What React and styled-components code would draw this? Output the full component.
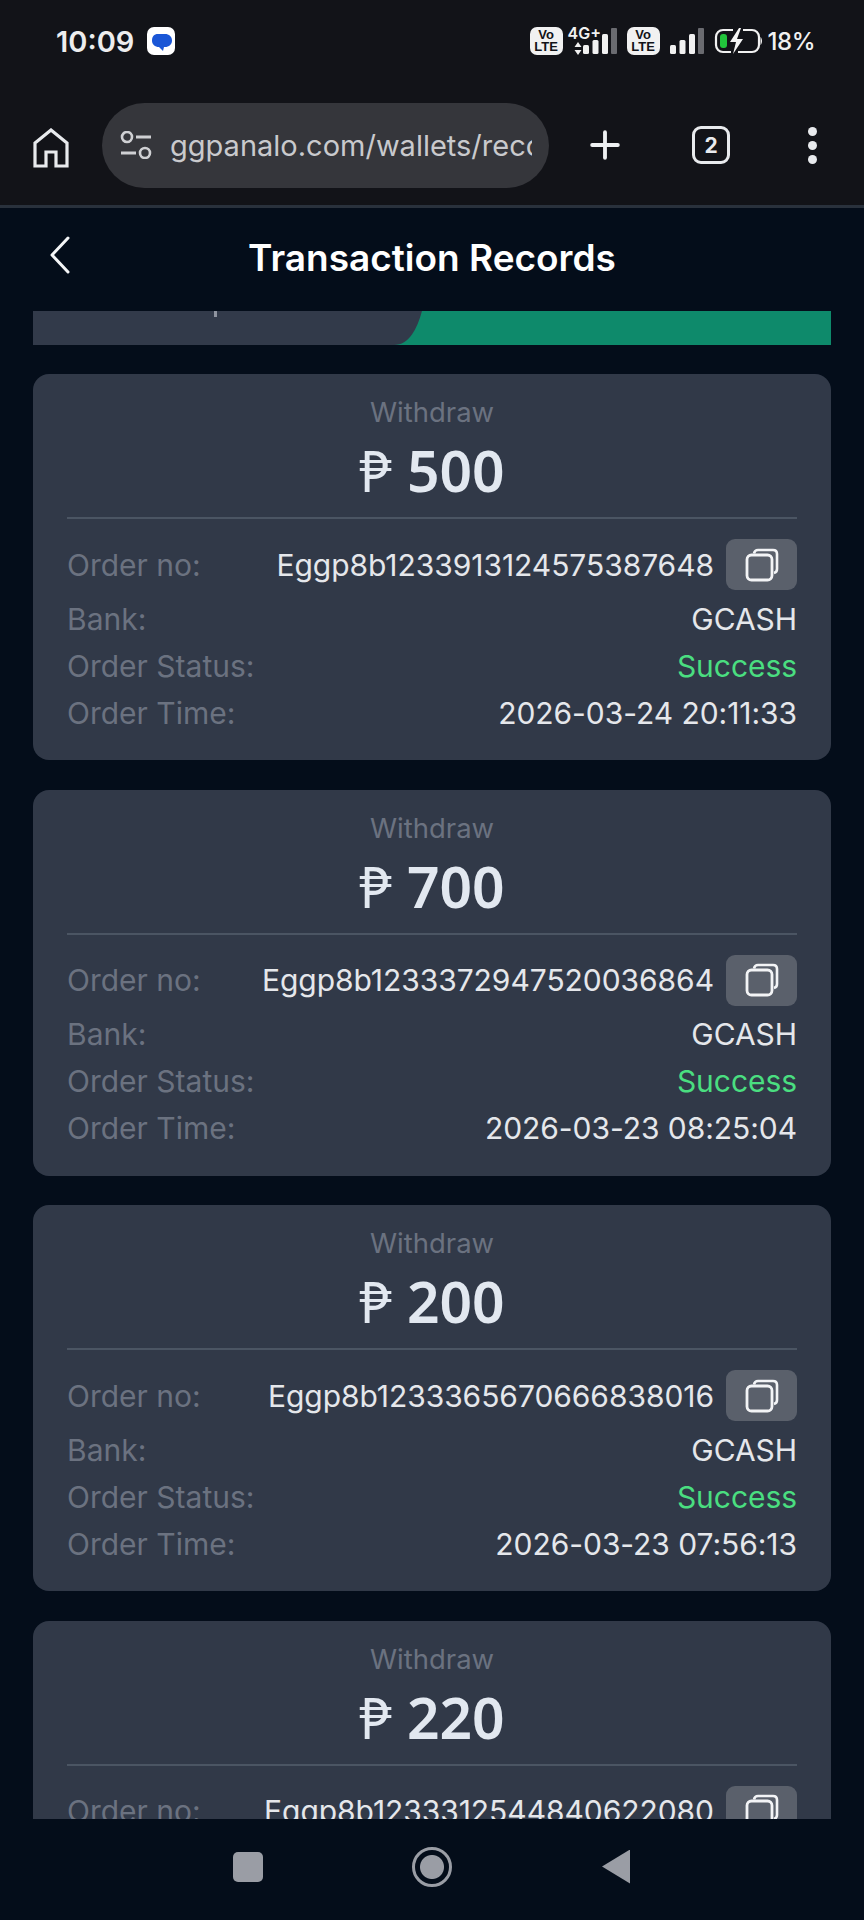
import React from 'react';
import styled, { createGlobalStyle } from 'styled-components';
import { Plus } from 'lucide-react';

const records = [
  { amount: '500', order: 'Eggp8b1233913124575387648', time: '2026-03-24 20:11:33' },
  { amount: '700', order: 'Eggp8b1233372947520036864', time: '2026-03-23 08:25:04' },
  { amount: '200', order: 'Eggp8b1233365670666838016', time: '2026-03-23 07:56:13' },
  { amount: '220', order: 'Eggp8b1233312544840622080' },
];

const App = () => {
  const cards = records.map(item => (
    <Card key={item.order}>
      <Kind>Withdraw</Kind>
      <Amount><Peso>₱</Peso>{item.amount}</Amount>
      <Details>
        <OrderRow>
          <Label>Order no:</Label>
          <OrderValue>
            <Value>{item.order}</Value>
            <CopyButton><CopyIcon /></CopyButton>
          </OrderValue>
        </OrderRow>
        {item.time && (
          <>
            <Row><Label>Bank:</Label><Value>GCASH</Value></Row>
            <Row><Label>Order Status:</Label><Value $success>Success</Value></Row>
            <Row><Label>Order Time:</Label><Value>{item.time}</Value></Row>
          </>
        )}
      </Details>
    </Card>
  ));

  return (
    <Screen>
      <GlobalStyle />
      <BrowserTop>
        <StatusBar>
          <StatusLeft>
            <Clock>10:09</Clock>
            <MessagesIcon />
          </StatusLeft>
          <StatusRight>
            <VoLte><span>Vo</span><span>LTE</span></VoLte>
            <Network>
              <NetworkType>4G+</NetworkType>
              <Arrows />
            </Network>
            <SignalBars />
            <VoLteGap />
            <VoLte><span>Vo</span><span>LTE</span></VoLte>
            <SignalGap />
            <SignalBars />
            <BatteryGap />
            <BatteryIcon />
            <Percent>18%</Percent>
          </StatusRight>
        </StatusBar>
        <Toolbar>
          <HomeIcon />
          <UrlPill>
            <TuneIcon />
            <UrlText>ggpanalo.com/wallets/records</UrlText>
          </UrlPill>
          <PlusButton><Plus size={44} strokeWidth={2.1} color="#eef0f2" /></PlusButton>
          <TabCount>2</TabCount>
          <MenuDots><i /><i /><i /></MenuDots>
        </Toolbar>
      </BrowserTop>

      <Header>
        <BackIcon />
        <Title>Transaction Records</Title>
      </Header>

      <Content>
        <TabStrip>
          <LeftTab><Tick /></LeftTab>
        </TabStrip>
        {cards}
      </Content>

      <NavBar>
        <NavSquare />
        <NavHome />
        <NavBack />
      </NavBar>
    </Screen>
  );
};

const MessagesIcon = () => (
  <svg width="28" height="28" viewBox="0 0 28 28">
    <rect width="28" height="28" rx="7" fill="#fff" />
    <path d="M11 7h7c4 0 7 2.500 7 6.500S22 20 18 20h-1l-1 4-4-4c-4 0-7-2.500-7-6.500S7 7 11 7z" fill="#1a56d6" />
  </svg>
);

const Arrows = () => (
  <svg width="8" height="13" viewBox="0 0 8 13">
    <path d="M4 0l3.5 5H.5zM4 13L.5 8h7z" fill="#f1f1f1" />
  </svg>
);

const SignalBars = () => (
  <svg width="34" height="26" viewBox="0 0 34 26">
    <rect x="0" y="17" width="6" height="9" rx="1.5" fill="#f1f1f1" />
    <rect x="9.5" y="12" width="6" height="14" rx="1.5" fill="#f1f1f1" />
    <rect x="19" y="6" width="6" height="20" rx="1.5" fill="#f1f1f1" />
    <rect x="28" y="0" width="6" height="26" rx="1" fill="#6a6b70" />
  </svg>
);

const BatteryIcon = () => (
  <svg width="48" height="28" viewBox="0 0 48 28">
    <path d="M19 3H9a7 7 0 0 0-7 7v8a7 7 0 0 0 7 7h8M29 3h9a7 7 0 0 1 7 7v8a7 7 0 0 1-7 7H24" fill="none" stroke="#f1f1f1" strokeWidth="2.2" />
    <path d="M46.500 10c1 1 1.500 2.500 1.500 4s-.5 3-1.500 4z" fill="#f1f1f1" />
    <rect x="6" y="7" width="7" height="14" rx="3" fill="#21c53c" />
    <path d="M25 1L16 15h6l-3 12 10-15h-6l4-11z" fill="#f5f5f5" />
  </svg>
);

const HomeIcon = () => (
  <HomeSvg width="36" height="40" viewBox="0 0 36 40">
    <path d="M2 38V15L18 2l16 13v23H23V24H13v14z" fill="none" stroke="#e8eaed" strokeWidth="3.2" />
  </HomeSvg>
);

const TuneIcon = () => (
  <TuneSvg width="32" height="28" viewBox="0 0 32 28">
    <circle cx="7" cy="6" r="5" fill="none" stroke="#cfd0d3" strokeWidth="2.6" />
    <circle cx="25" cy="22" r="5" fill="none" stroke="#cfd0d3" strokeWidth="2.6" />
    <path d="M16 6h15M1 22h15" stroke="#cfd0d3" strokeWidth="2.8" />
  </TuneSvg>
);

const BackIcon = () => (
  <BackSvg width="22" height="38" viewBox="0 0 22 38">
    <path d="M19 2L3 19l16 17" fill="none" stroke="#f4f5f7" strokeWidth="3" strokeLinecap="round" strokeLinejoin="round" />
  </BackSvg>
);

const CopyIcon = () => (
  <svg width="34" height="34" viewBox="0 0 34 34">
    <path d="M9 5.500C9.500 3 11 2 13 2h15c2.500 0 4 1.500 4 4v15c0 2-1 3.500-3 4" fill="none" stroke="#f3f4f6" strokeWidth="2.6" />
    <rect x="2" y="7" width="25" height="25" rx="4.500" fill="none" stroke="#f3f4f6" strokeWidth="2.8" />
  </svg>
);

const GlobalStyle = createGlobalStyle`
  html, body {
    margin: 0;
    padding: 0;
    background: #040d1a;
  }
  * {
    box-sizing: border-box;
  }
`;

const Screen = styled.div`
  width: 864px;
  height: 1920px;
  display: flex;
  flex-direction: column;
  overflow: hidden;
  background: #040d1a;
  font-family: Inter, "Noto Sans", sans-serif;
`;

const BrowserTop = styled.div`
  height: 208px;
  background: #121318;
  border-bottom: 3px solid #29313c;
`;

const StatusBar = styled.div`
  height: 92px;
  padding: 0 49px 10px 56px;
  display: flex;
  align-items: center;
  justify-content: space-between;
`;

const StatusLeft = styled.div`
  display: flex;
  align-items: center;
  gap: 13px;
`;

const Clock = styled.span`
  color: #ededee;
  font-size: 29px;
  font-weight: 600;
`;

const StatusRight = styled.div`
  display: flex;
  align-items: center;
`;

const VoLte = styled.div`
  width: 33px;
  height: 28px;
  border-radius: 7px;
  background: #f1f1f1;
  color: #121318;
  display: flex;
  flex-direction: column;
  align-items: center;
  justify-content: center;
  font-family: "Liberation Sans", sans-serif;
  font-size: 13px;
  font-weight: 700;
  line-height: 12px;
`;

const Network = styled.div`
  width: 20px;
  height: 28px;
  position: relative;
  display: flex;
  align-items: flex-end;
  padding-left: 11px;
`;

const NetworkType = styled.span`
  position: absolute;
  left: 5px;
  top: -4px;
  color: #f1f1f1;
  font-size: 16px;
  font-weight: 600;
  white-space: nowrap;
`;

const VoLteGap = styled.div`
  width: 10px;
`;

const SignalGap = styled.div`
  width: 10px;
`;

const BatteryGap = styled.div`
  width: 10px;
`;

const Percent = styled.span`
  margin-left: 6px;
  color: #f1f1f1;
  font-size: 24px;
  font-weight: 500;
  letter-spacing: -0.5px;
`;

const Toolbar = styled.div`
  height: 106px;
  position: relative;
  display: flex;
  align-items: center;
  padding: 0 0 0 33px;
`;

const HomeSvg = styled.svg`
  flex: none;
  margin-top: 5px;
`;

const UrlPill = styled.div`
  width: 447px;
  height: 85px;
  margin: 0 0 0 33px;
  border-radius: 43px;
  background: #35363b;
  display: flex;
  align-items: center;
  padding: 0 17px 0 18px;
  overflow: hidden;
`;

const TuneSvg = styled.svg`
  flex: none;
`;

const UrlText = styled.div`
  margin-left: 18px;
  flex: 1;
  overflow: hidden;
  white-space: nowrap;
  color: #c9cacd;
  font-size: 29px;
`;

const PlusButton = styled.div`
  margin-left: 34px;
  display: flex;
`;

const TabCount = styled.div`
  width: 38px;
  height: 38px;
  margin-left: 65px;
  border: 3.5px solid #e8eaed;
  border-radius: 9px;
  color: #e8eaed;
  font-size: 21px;
  font-weight: 700;
  display: flex;
  align-items: center;
  justify-content: center;
`;

const MenuDots = styled.div`
  margin-left: 78px;
  display: flex;
  flex-direction: column;
  gap: 5px;

  i {
    display: block;
    width: 9px;
    height: 9px;
    border-radius: 50%;
    background: #e8eaed;
  }
`;

const Header = styled.div`
  height: 103px;
  flex: none;
  position: relative;
  display: flex;
  align-items: center;
  justify-content: center;
  padding-bottom: 4px;
  background: #040d1a;
`;

const BackSvg = styled.svg`
  position: absolute;
  left: 49px;
  top: 28px;
`;

const Title = styled.h1`
  margin: 0;
  color: #fff;
  font-size: 37px;
  font-weight: 600;
`;

const Content = styled.div`
  flex: 1;
  min-height: 0;
  overflow: hidden;
  padding: 0 33px;
  display: flex;
  flex-direction: column;
  gap: 29.6px;
`;

const TabStrip = styled.div`
  flex: none;
  height: 34px;
  margin-bottom: -0.6px;
  background: #0e8a6b;
`;

const LeftTab = styled.div`
  position: relative;
  width: 389px;
  height: 34px;
  background: #323a4a;
  clip-path: path('M0 0H389C384 18 376 34 361 34H0Z');
`;

const Tick = styled.span`
  position: absolute;
  left: 181px;
  top: 0;
  width: 3px;
  height: 6px;
  background: #8f94a0;
`;

const Card = styled.div`
  flex: none;
  height: 386px;
  padding: 20px 34px 0;
  border-radius: 16px;
  background: #313948;
`;

const Kind = styled.div`
  height: 36px;
  line-height: 36px;
  text-align: center;
  color: #6b7280;
  font-size: 27.5px;
`;

const Amount = styled.div`
  height: 89px;
  line-height: 80px;
  text-align: center;
  color: #e2e8f0;
  font-family: "Noto Sans", sans-serif;
  font-size: 57px;
  font-weight: 600;
  border-bottom: 2px solid #4b5563;
`;

const Peso = styled.span`
  margin-right: 15px;
  font-weight: 400;
`;

const Details = styled.div`
  padding-top: 20px;
`;

const Row = styled.div`
  height: 47px;
  display: flex;
  align-items: center;
  justify-content: space-between;
  white-space: nowrap;
`;

const OrderRow = styled(Row)`
  height: 51px;
  margin-bottom: 5px;
`;

const OrderValue = styled.div`
  display: flex;
  align-items: center;
  gap: 12px;
`;

const Label = styled.span`
  color: #6b7280;
  font-size: 30px;
`;

const Value = styled.span`
  color: ${props => (props.$success ? '#4ade80' : '#e5e7eb')};
  font-size: 30px;
  letter-spacing: -0.05px;
`;

const CopyButton = styled.div`
  width: 71px;
  height: 51px;
  border-radius: 9px;
  background: #5a606b;
  display: flex;
  align-items: center;
  justify-content: center;
`;

const NavBar = styled.div`
  height: 101px;
  flex: none;
  background: #040d1a;
  position: relative;
  display: flex;
  align-items: center;
  padding: 0 0 6px 233px;
`;

const NavSquare = styled.div`
  width: 30px;
  height: 30px;
  border-radius: 5px;
  background: #9a9da5;
`;

const NavHome = styled.div`
  width: 40px;
  height: 40px;
  margin-left: 149px;
  border-radius: 50%;
  border: 3px solid #9a9da5;
  background: radial-gradient(circle, #9a9da5 0 11.500px, transparent 12.500px);
`;

const NavBack = styled.div`
  width: 28px;
  height: 34px;
  margin-left: 150px;
  background: #9a9da5;
  clip-path: polygon(100% 0, 100% 100%, 0 50%);
`;

export default App;
